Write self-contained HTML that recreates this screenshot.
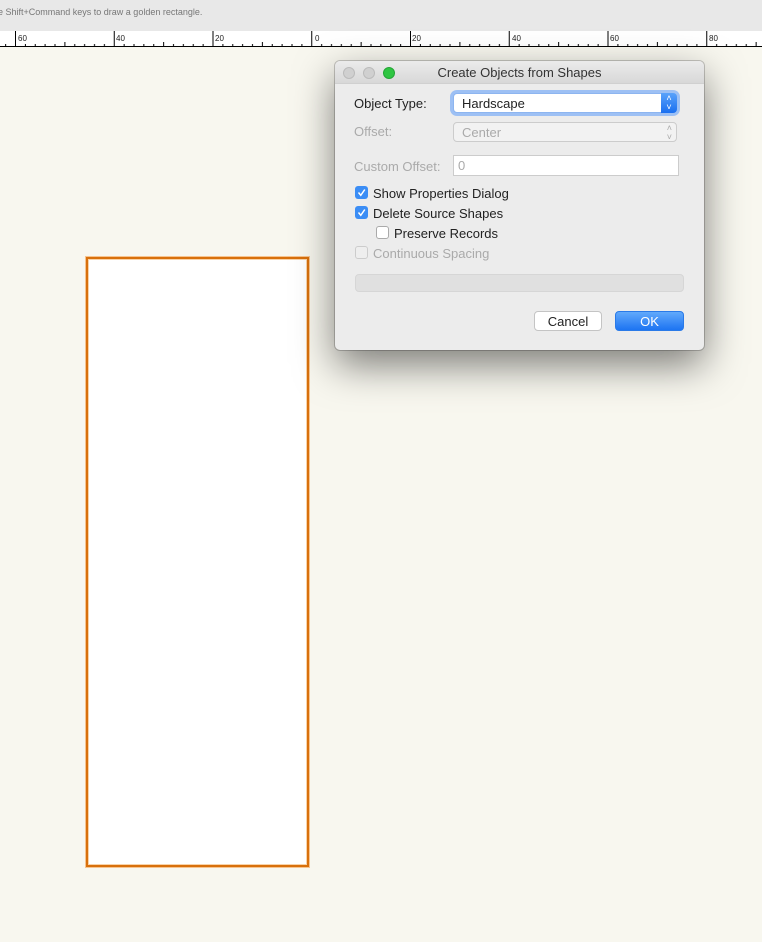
<!DOCTYPE html>
<html><head><style>
body{margin:0;width:762px;height:942px;background:#f8f7ef;position:relative;overflow:hidden;font-family:"Liberation Sans",sans-serif}
.top{position:absolute;left:0;top:0;width:762px;height:31px;background:#e8e8e8}
.top span{position:absolute;left:-2px;top:7px;font-size:9px;color:#777}
.rect{position:absolute;left:86px;top:257px;width:219px;height:606px;background:#fff;border:2px solid #d8700c;box-shadow:0 0 0 1px #f7c48f,inset 0 0 0 1px #f9d3a8}
.dlg{position:absolute;left:335px;top:61px;width:369px;height:289px;background:#ececec;border-radius:5px;box-shadow:0 15px 40px rgba(0,0,0,.5),0 0 0 1px rgba(0,0,0,.2);font-size:13px;color:#222}
.tb{height:22px;border-bottom:1px solid #d0d0d0;background:linear-gradient(#ebebeb,#d8d8d8);border-radius:5px 5px 0 0;text-align:center;line-height:23px;color:#333}
.dot{position:absolute;top:6px;width:12px;height:12px;border-radius:50%;background:#d0d0d0;border:0.5px solid #bbb;box-sizing:border-box}
.a{position:absolute}
.gray{color:#aaa}
.pop{position:absolute;height:20px;border-radius:4px;box-sizing:border-box}
.cb{position:absolute;width:13px;height:13px;border-radius:3px;box-sizing:border-box}
.btn{position:absolute;height:20px;border-radius:4px;box-sizing:border-box;text-align:center;line-height:19px}
</style></head><body>
<div class="top"><span>e Shift+Command keys to draw a golden rectangle.</span></div>
<svg width="762" height="16" style="position:absolute;left:0;top:31px;background:#fff">
<defs><pattern id="p" x="15" y="0" width="98.75" height="16" patternUnits="userSpaceOnUse">
<rect x="0" y="0" width="1" height="15" fill="#000"/>
<rect x="9.9" y="13" width="1" height="2" fill="#000"/><rect x="19.75" y="13" width="1" height="2" fill="#000"/>
<rect x="29.6" y="13" width="1" height="2" fill="#000"/><rect x="39.5" y="13" width="1" height="2" fill="#000"/>
<rect x="49.4" y="11" width="1" height="4" fill="#000"/><rect x="59.25" y="13" width="1" height="2" fill="#000"/>
<rect x="69.1" y="13" width="1" height="2" fill="#000"/><rect x="79" y="13" width="1" height="2" fill="#000"/>
<rect x="88.9" y="13" width="1" height="2" fill="#000"/>
</pattern></defs>
<rect width="762" height="15" fill="url(#p)"/>
<rect x="0" y="15" width="762" height="1" fill="#000"/>
<g font-size="8" fill="#222" font-family="Liberation Sans">
<text x="18" y="10">60</text><text x="116" y="10">40</text><text x="215" y="10">20</text><text x="315" y="10">0</text>
<text x="412" y="10">20</text><text x="512" y="10">40</text><text x="610" y="10">60</text><text x="709" y="10">80</text></g>
</svg>
<div class="rect"></div>
<div class="dlg">
<div class="tb">Create Objects from Shapes</div>
<div class="dot" style="left:8px"></div><div class="dot" style="left:28px"></div>
<div class="dot" style="left:48px;background:#2fc542;border-color:#24a636"></div>
<div class="a" style="left:19px;top:35px">Object Type:</div>
<div class="pop" style="left:118px;top:32px;width:224px;background:#fff;border:1px solid #8db5f0;box-shadow:0 0 0 3px #9dc0f4">
<span class="a" style="left:8px;top:2px">Hardscape</span>
<div class="a" style="right:-1px;top:-1px;width:16px;height:20px;background:linear-gradient(#5aa2fa,#1a6ff0);border-radius:0 4px 4px 0;color:#fff;font-size:9px;text-align:center;line-height:9px;padding-top:1px;box-sizing:border-box">˄<br>˅</div></div>
<div class="a gray" style="left:19px;top:63px">Offset:</div>
<div class="pop" style="left:118px;top:61px;width:224px;background:#f2f2f2;border:1px solid #ccc">
<span class="a gray" style="left:8px;top:2px">Center</span><span class="a gray" style="right:4px;top:1px;font-size:9px;line-height:9px">˄<br>˅</span></div>
<div class="a gray" style="left:19px;top:98px">Custom Offset:</div>
<div class="a" style="left:118px;top:94px;width:226px;height:21px;background:#fff;border:1px solid #ccc;box-sizing:border-box"><span class="a gray" style="left:4px;top:2px">0</span></div>
<div class="cb" style="left:20px;top:125px;background:#3b8df5"><svg width="13" height="13"><path d="M3.5 6.5l2.3 2.8L9.8 3.5" stroke="#fff" stroke-width="1.5" fill="none"/></svg></div>
<div class="a" style="left:38px;top:125px">Show Properties Dialog</div>
<div class="cb" style="left:20px;top:145px;background:#3b8df5"><svg width="13" height="13"><path d="M3.5 6.5l2.3 2.8L9.8 3.5" stroke="#fff" stroke-width="1.5" fill="none"/></svg></div>
<div class="a" style="left:38px;top:145px">Delete Source Shapes</div>
<div class="cb" style="left:41px;top:165px;background:#fff;border:1px solid #aaa"></div>
<div class="a" style="left:59px;top:165px">Preserve Records</div>
<div class="cb" style="left:20px;top:185px;background:#eee;border:1px solid #ccc"></div>
<div class="a gray" style="left:38px;top:185px">Continuous Spacing</div>
<div class="a" style="left:20px;top:213px;width:329px;height:18px;background:#e0e0e0;border:1px solid #d6d6d6;border-radius:4px;box-sizing:border-box"></div>
<div class="btn" style="left:199px;top:250px;width:68px;background:#fff;border:1px solid #c4c4c4">Cancel</div>
<div class="btn" style="left:280px;top:250px;width:69px;background:linear-gradient(#62a9fb,#1d74f2);color:#fff;border:1px solid #2a7ae8">OK</div>
</div>
</body></html>
